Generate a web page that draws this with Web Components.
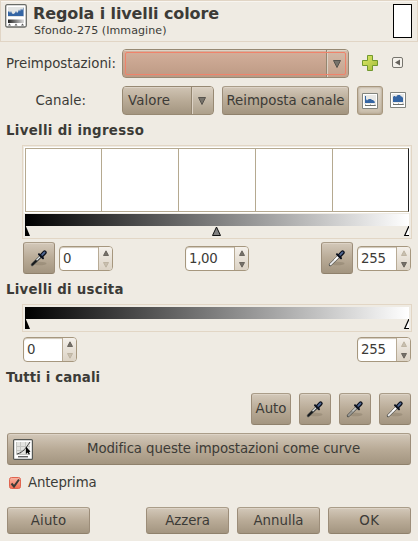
<!DOCTYPE html>
<html lang="it">
<head>
<meta charset="utf-8">
<title>Regola i livelli colore</title>
<style>
html,body{margin:0;height:541px;overflow:hidden;background:#efebe3}
body{font:13.33px/15px "DejaVu Sans",sans-serif;color:#3c3b37}
</style>
</head>
<body>
<levels-dialog></levels-dialog>
<script>
function define(name, html) {
  const t = document.createElement('template');
  t.innerHTML = html;
  customElements.define(name, class extends HTMLElement {
    connectedCallback() {
      if (this.shadowRoot) return;
      this.attachShadow({mode: 'open'}).appendChild(t.content.cloneNode(true));
    }
  });
}

define('gx-button', `<style>
:host{display:flex;align-items:center;justify-content:center;box-sizing:border-box;height:32px;flex:none;white-space:nowrap;line-height:14px;
border:1px solid #9c8d77;border-color:#aa9d89 #9c8d79 #8f816c;border-radius:3px;background:linear-gradient(#d3c8b9,#b9ab97 50%,#a39580);box-shadow:inset 0 1px #ddd3c6}
:host([short]){height:27px;width:83px;line-height:15px}
:host([toggled]){border-color:#a8987f;background:linear-gradient(#e4ddd2,#c9bdab);box-shadow:inset 0 0 3px #9f8f78}
</style><slot></slot>`);

define('gx-combo', `<style>
:host{display:flex;box-sizing:border-box;height:29px;flex:none;position:relative;border:1px solid #978973;border-radius:4px;overflow:hidden;
background:linear-gradient(#d0c4b4,#b9ab97 50%,#a39580)}
.v{flex:1;display:flex;align-items:center;padding-left:5px;box-shadow:inset 0 1px #ddd3c6}
.a{width:21px;border-left:1px solid #948670;display:flex;align-items:center;justify-content:center;background:linear-gradient(#d9cfc1,#ada08b);box-shadow:inset 1px 1px #ddd3c6}
svg{margin-right:2px}
.f{display:none}
:host([focused]) .v{background:linear-gradient(#d4b09c,#bd9a84)}
:host([focused]) .a{background:linear-gradient(#d4bba9,#c5a28c)}
:host([focused]) .f{display:block;position:absolute;inset:2px;border:1px solid #f0836b;border-radius:2px}
</style><div class="v"><slot></slot></div><div class="a"><svg width="8" height="8" viewBox="0 0 8 8"><path d="M.5.5h7L4 7.5z" fill="#77736b" stroke="#57534d"/></svg></div><div class="f"></div>`);

define('gx-spin', `<style>
:host{display:flex;box-sizing:border-box;width:54px;height:25px;flex:none;border:1px solid #a6977e;border-radius:4px;overflow:hidden;background:#fff;box-shadow:inset 0 1px 1px #cfc6b7}
.v{flex:1;padding-left:3px;display:flex;align-items:center}
.b{width:13px;border-left:1px solid #b8ab96;background:linear-gradient(#f4f0ea,#dcd3c5);display:flex;flex-direction:column;align-items:center;justify-content:space-between;padding:3px 0 2px;box-sizing:content-box}
svg{display:block;fill:#76726a;stroke:#5a564f;stroke-width:.8}
:host([min]) .d,:host([max]) .u{fill:#c9c0b0;stroke:#b8ad9a}
</style><div class="v"><slot></slot></div><div class="b">
<svg class="u" width="6" height="6" viewBox="0 0 6 6"><path d="M3 .8 5.500 5.500h-5z"/></svg>
<svg class="d" width="6" height="6" viewBox="0 0 6 6"><path d="M3 5.200 5.500.5h-5z"/></svg></div>`);

define('gx-heading', `<style>:host{display:block;box-sizing:border-box;font-weight:bold;padding-left:6px;line-height:20px;height:18px;flex:none;white-space:nowrap}</style><slot></slot>`);

define('gx-frame', `<style>:host{display:block;box-sizing:border-box;width:390px;margin-left:22px;border:1px solid #e2d6c5;padding:2px;flex:none}</style><slot></slot>`);

define('gx-histogram', `<style>
:host{display:grid;grid-template-columns:76px repeat(4,77px);box-sizing:border-box;height:64px;margin-bottom:2px;background:#fff;border:1px solid #b5a990;border-right-color:#222;width:384px;overflow:hidden;outline:1px solid #fff}
i{border-right:1px solid #b5a990}i:last-child{border:0}
</style><i></i><i></i><i></i><i></i><i></i>`);

define('gx-gradient', `<style>
:host{display:block;width:384px}
.g{height:12px;background:linear-gradient(90deg,#000,#fff)}
svg{display:block}
.m{display:none}:host([gamma]) .m{display:inline}
</style><div class="g"></div><svg width="384" height="10" viewBox="0 0 384 10">
<path d="M0 0h.8L5 10H0z" fill="#000"/>
<path class="m" d="M191.500 1 195.500 9.500h-8z" fill="#808080" stroke="#111"/>
<path d="M384 0 379.700 9.500H384" fill="#fff" stroke="#000" stroke-width="1.200"/></svg>`);

define('gx-dropper', `<style>:host{display:block;width:18px;height:18px;--ink:#eee}:host([tone=black]){--ink:#15181a}:host([tone=gray]){--ink:#9c9c98}
:host([tone=black]) .hl{stroke:#dfe3e3}:host([tone=gray]) .hl{stroke:#c4c6c3}svg{display:block}</style>
<svg width="18" height="18" viewBox="0 0 18 18"><ellipse cx="9.500" cy="14.500" rx="7" ry="1.800" fill="#675b49" opacity=".25"/>
<path d="M2.200 15.800 10.800 7.400" stroke="#50514d" stroke-width="2.900" stroke-linecap="round"/>
<path d="M2.600 15.400 10.800 7.400" stroke="var(--ink)" stroke-width="1.900" stroke-linecap="round"/>
<path class="hl" d="M6.500 11.200 10.300 7.500" stroke="#fff" stroke-width="1.500"/>
<path d="m9 5.300 4 4" stroke="#0b101c" stroke-width="2" stroke-linecap="round"/>
<path d="m12 6.200 2.600-2.600" stroke="#0b101c" stroke-width="4.200" stroke-linecap="round"/>
<path d="m12.200 5.800 2.300-2.400" stroke="#526a96" stroke-width="1.800" stroke-linecap="round"/></svg>`);

define('gx-histicon', `<style>:host{display:block;width:16px;height:16px}.o{display:none}:host([log]) .o{display:inline}:host([log]) .l{display:none}svg{display:block}</style>
<svg width="16" height="16" viewBox="0 0 16 16"><path d="M.5.500h15v15H.5z" fill="#fff" stroke="#82847e"/><path d="M2 2h12v9H2z" fill="#e9e9e7"/>
<path class="l" d="M3 3h1v3l1 1.500 1-1 1-.5 2 0 1 1h1l1 1h.5v1l.5 1H3z" fill="#3465a4"/>
<path class="o" d="M3 5l1-1h1l1 1 1-1.500 1-.5h2l1 1.500 1 0 1 1.500V10H3z" fill="#3465a4"/>
<path d="M3 12.500h10.500M3.500 11.500v1.500M8.500 11.500v1.500M13 11.500v1.500" stroke="#6d6f6b" fill="none"/></svg>`);

define('gx-header', `<style>
:host{display:flex;box-sizing:border-box;height:42px;flex:none;border:1px solid #e1d5c5;box-shadow:inset 0 1px #f8f5f0;padding:3px 5px 0 4px}
.i{display:block;width:22px;height:24px;flex:none}
.t{flex:1;padding-left:6px;white-space:nowrap}
.a{font-weight:bold;font-size:16px;line-height:20px;height:20px}
.b{font-size:11.100px;line-height:14px;padding-left:1px}
.p{box-sizing:border-box;width:19px;height:34px;border:1px solid #000;background:#fff}
</style><svg class="i" width="22" height="24" viewBox="0 0 22 24">
<defs><linearGradient id="g"><stop stop-color="#222"/><stop offset="1" stop-color="#ddd"/></linearGradient></defs>
<rect x=".7" y=".7" width="20.600" height="22.300" rx="1.500" fill="#fff" stroke="#696b67" stroke-width="1.300"/>
<path d="M3 3h16v10H3z" fill="#e3e5e4"/><path d="M3 12V8l1-1 1 2 1-2 1 2.500 1.500.5 1.500-1 1-2 1 2 1-1 1-2.500 1 2 1-3 1 2 1.500-3V12z" fill="#3465a4"/>
<path d="M3 15.500h16V19H3z" fill="url(#g)"/><path d="M3 21.500l1.500-2 1.500 2zM9.500 21.500l1.500-2 1.500 2zM16 21.500l1.500-2 1.500 2z" fill="#555"/></svg>
<div class="t"><div class="a"><slot name="title"></slot></div><div class="b"><slot name="subtitle"></slot></div></div><div class="p"></div>`);

define('gx-check', `<style>:host{display:flex;align-items:center;height:16px;gap:7px;padding-left:9px;flex:none;line-height:14px}svg{display:block}</style>
<svg width="12" height="12" viewBox="0 0 12 12" overflow="visible"><defs><linearGradient id="r" x2="0" y2="1"><stop stop-color="#f9b7a6"/><stop offset="1" stop-color="#f26b50"/></linearGradient></defs>
<rect x=".5" y=".5" width="11" height="11" rx="2" fill="url(#r)" stroke="#e06550"/><path d="M2.500 6.500 5 9.500 10 2.500" fill="none" stroke="#3c3b37" stroke-width="2"/></svg><slot></slot>`);

define('levels-dialog', `<style>
:host{display:flex;flex-direction:column;width:418px;height:541px}
.row{display:flex;flex:none}
.lab{width:122px;box-sizing:border-box;padding-left:6px;line-height:30px;height:29px;white-space:nowrap}
.sp{flex:1}
svg{display:block}
</style>
<gx-header><gx-text w="186" slot="title">Regola i livelli colore</gx-text><gx-text w="132.5" slot="subtitle">Sfondo-275 (Immagine)</gx-text></gx-header>
<div class="row" style="margin-top:7px">
 <div class="lab"><gx-text w="110">Preimpostazioni:</gx-text></div><gx-combo focused style="width:227px"></gx-combo>
 <svg style="margin:6px 0 0 13px" width="16" height="16" viewBox="0 0 16 16"><defs><linearGradient id="p" x2="1" y2="1"><stop stop-color="#dde965"/><stop offset="1" stop-color="#a3bb3b"/></linearGradient></defs><path d="M5.500.500h5v5h5v5h-5v5h-5v-5h-5v-5h5z" fill="url(#p)" stroke="#71992e"/></svg>
 <svg style="margin:8px 0 0 14px" width="11" height="11" viewBox="0 0 11 11"><rect x=".5" y=".5" width="10" height="10" rx="1.500" fill="#f4f1eb" stroke="#77756e"/><path d="M8 2.500v6L3 5.500z" fill="#66635d"/></svg>
</div>
<div class="row" style="margin-top:8px">
 <div class="lab" style="padding-left:35.5px"><gx-text w="50.5">Canale:</gx-text></div><gx-combo style="width:92px"><gx-text w="42">Valore</gx-text></gx-combo>
 <gx-button short style="width:127px;height:29px;margin-left:8px"><gx-text w="118">Reimposta canale</gx-text></gx-button>
 <gx-button toggled style="width:26px;height:29px;margin-left:8px"><gx-histicon></gx-histicon></gx-button>
 <gx-histicon log style="margin:6px 0 0 7px"></gx-histicon>
</div>
<gx-heading style="margin-top:6px"><gx-text w="138.2">Livelli di ingresso</gx-text></gx-heading>
<gx-frame style="height:94px;margin-top:6px"><gx-histogram></gx-histogram><gx-gradient gamma></gx-gradient></gx-frame>
<div class="row" style="margin:3px 7px 0 23px;align-items:center">
 <gx-button style="width:32px"><gx-dropper tone="black"></gx-dropper></gx-button>
 <gx-spin min style="margin-left:4px">0</gx-spin>
 <gx-spin style="margin-left:72px;width:64px"><gx-text w="28.5">1,00</gx-text></gx-spin>
 <span class="sp"></span>
 <gx-button style="width:32px"><gx-dropper></gx-dropper></gx-button>
 <gx-spin max style="margin-left:4px"><gx-text w="24.7">255</gx-text></gx-spin>
</div>
<gx-heading style="margin-top:6px"><gx-text w="117.7">Livelli di uscita</gx-text></gx-heading>
<gx-frame style="height:28px;margin-top:6px"><gx-gradient></gx-gradient></gx-frame>
<div class="row" style="margin:5px 7px 0 23px"><gx-spin min>0</gx-spin><span class="sp"></span><gx-spin max><gx-text w="24.7">255</gx-text></gx-spin></div>
<gx-heading style="margin-top:6px"><gx-text w="94.3">Tutti i canali</gx-text></gx-heading>
<div class="row" style="margin:7px 7px 0 0;justify-content:flex-end;gap:8px">
 <gx-button style="width:40px"><gx-text w="31">Auto</gx-text></gx-button>
 <gx-button style="width:32px"><gx-dropper tone="black"></gx-dropper></gx-button>
 <gx-button style="width:32px"><gx-dropper tone="gray"></gx-dropper></gx-button>
 <gx-button style="width:32px"><gx-dropper></gx-dropper></gx-button>
</div>
<gx-button style="margin:8px 7px 0;justify-content:flex-start;padding-left:5px">
 <svg width="20" height="21" viewBox="0 0 20 21"><rect x=".6" y=".6" width="18.800" height="19.800" rx="1" fill="#fff" stroke="#555753" stroke-width="1.200"/><path d="M3 3h14v12.500H3z" fill="#e3e3e0"/><path d="M3.500 3v12.500H17M7.500 3v12M12.500 3v12M3 7.500h14M3 11.500h14" stroke="#c4c5c1" fill="none"/><path d="M4 15C10 13.500 13 9 17 3" stroke="#444" fill="none"/><path d="M5 17.800h10" stroke="#222"/><path d="M13 7.500v7.500l1.600-1.500 1.200 2 1-.6-1-2 1.700-.2z" fill="#000"/></svg>
 <gx-text w="273" style="margin-left:54px">Modifica queste impostazioni come curve</gx-text>
</gx-button>
<gx-check style="margin-top:10px"><gx-text w="68.5">Anteprima</gx-text></gx-check>
<div class="row" style="margin:16px 7px 0;gap:8px">
 <gx-button short><gx-text w="35.5">Aiuto</gx-text></gx-button><span class="sp"></span>
 <gx-button short><gx-text w="44.5">Azzera</gx-text></gx-button>
 <gx-button short><gx-text w="50">Annulla</gx-text></gx-button>
 <gx-button short><gx-text w="20.5">OK</gx-text></gx-button>
</div>`);

/* Text run whose tracking is adjusted so that its advance equals the "w" attribute. */
customElements.define('gx-text', class extends HTMLElement {
  connectedCallback() {
    if (this.shadowRoot) return;
    this.attachShadow({mode: 'open'}).innerHTML = '<style>:host{display:inline-block;white-space:nowrap;vertical-align:baseline}</style><slot></slot>';
    const want = parseFloat(this.getAttribute('w'));
    const have = this.getBoundingClientRect().width;
    if (have) this.style.letterSpacing = ((want - have) / this.textContent.length).toFixed(3) + 'px';
  }
});
</script>
</body>
</html>
